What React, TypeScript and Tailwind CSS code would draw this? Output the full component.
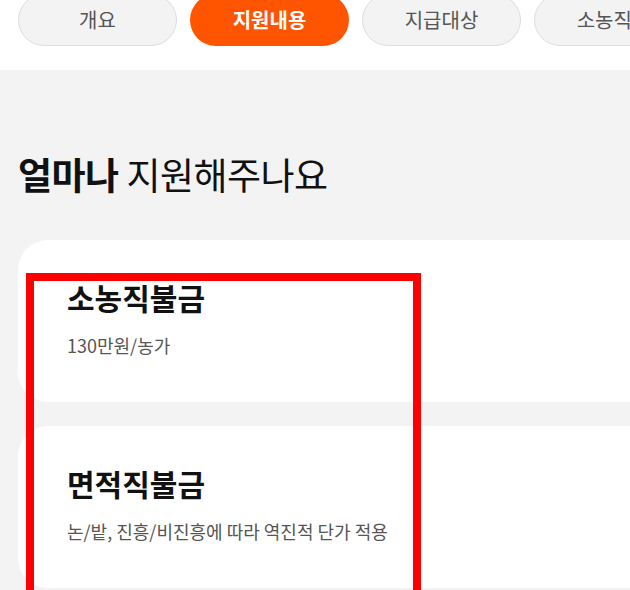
const tabs = ["개요", "지원내용", "지급대상", "소농직불"];

const cards = [
  { title: "소농직불금", desc: "130만원/농가" },
  { title: "면적직불금", desc: "논/밭, 진흥/비진흥에 따라 역진적 단가 적용" },
];

export default function App() {
  return (
    <div
      className="relative w-[630px] h-[590px] overflow-hidden bg-[#f3f3f3]"
      style={{ fontFamily: '"Noto Sans CJK KR", "Noto Sans", sans-serif' }}
    >
      {/* Tab bar (page scrolled a little, so the pills are cut at the top) */}
      <div className="bg-white h-[76px] mt-[-6px] flex flex-col">
        <div className="flex gap-[13px] pl-[18px]">
          {tabs.map((tab, i) => (
            <div
              key={tab}
              className={`shrink-0 w-[159px] h-[52px] rounded-full flex items-center justify-center text-[20px] whitespace-nowrap ${
                i === 1
                  ? "bg-[#ff5500] text-white font-bold"
                  : "bg-[#f3f3f3] border border-[#dedede] text-[#555]"
              }`}
            >
              {tab}
            </div>
          ))}
        </div>
      </div>

      {/* Content */}
      <div className="pt-[80px] pl-[18px]">
        <h2 className="text-[37px] leading-[48px] text-[#111] tracking-[-0.5px]">
          <span className="font-bold">얼마나</span> 지원해주나요
        </h2>

        <div className="mt-[42px] flex flex-col gap-[24px]">
          {cards.map((card) => (
            <div
              key={card.title}
              className="w-[720px] h-[162px] bg-white rounded-[30px] pl-[49px] pt-[37px]"
            >
              <h3 className="text-[30px] leading-[40px] font-bold text-[#111]">
                {card.title}
              </h3>
              <p className="mt-[15px] text-[18px] leading-[26px] text-[#555]">
                {card.desc}
              </p>
            </div>
          ))}
        </div>
      </div>

      {/* Highlight overlay */}
      <div className="absolute left-[26px] top-[273px] w-[395px] h-[400px] border-[8px] border-[#ff0000]" />
    </div>
  );
}
